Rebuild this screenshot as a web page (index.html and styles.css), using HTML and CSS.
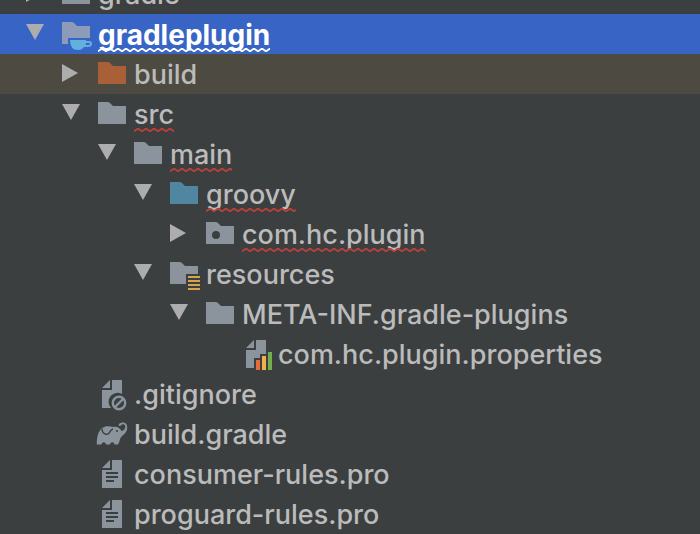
FILE: index.html
```html
<!DOCTYPE html>
<html lang="en">
<head>
<meta charset="utf-8">
<title>Project</title>
<link rel="stylesheet" href="styles.css">
</head>
<body>
<svg class="defs" aria-hidden="true">
  <defs>
    <symbol id="open" viewBox="0 0 36 40"><path d="M0 10H18L9 26Z" fill="#adadad"/></symbol>
    <symbol id="closed" viewBox="0 0 36 40"><path d="M0 10L16 19L0 28Z" fill="#adadad"/></symbol>
    <symbol id="folder" viewBox="0 0 36 40"><path d="M0 8H9.500Q11 8 12 9L15 12H28V30H0Z" fill="currentColor"/></symbol>
    <symbol id="module" viewBox="0 0 36 40">
      <path d="M0 8H9.500Q11 8 12 9L15 12H28V24H6V30H0Z" fill="currentColor"/>
      <path d="M8 26H24V27H27Q30 27 30 29.500Q30 33 26 33H22Q20 36 16 36Q8 36 8 26ZM24 29Q24 30 23.500 31H26Q28 31 28 29.500Q28 29 27 29Z" fill="#62b1dc" fill-rule="evenodd"/>
    </symbol>
    <symbol id="package" viewBox="0 0 36 40"><path d="M0 8H9.500Q11 8 12 9L15 12H28V30H0ZM10 17A4 4 0 1 0 10 25A4 4 0 1 0 10 17Z" fill="currentColor" fill-rule="evenodd"/></symbol>
    <symbol id="resources" viewBox="0 0 36 40">
      <path d="M0 8H9.500Q11 8 12 9L15 12H28V20H16V30H0Z" fill="currentColor"/>
      <path d="M18 22H30V24H18ZM18 26H30V28H18ZM18 30H30V32H18ZM18 34H30V36H18Z" fill="#d5a54b"/>
    </symbol>
    <symbol id="properties" viewBox="0 0 36 40">
      <path d="M4 14L12 6V14ZM14 6H24V20H18V24H12V34H4V16H14Z" fill="currentColor"/>
      <path d="M14 26H18V36H14Z" fill="#e66d3b"/><path d="M20 22H24V36H20Z" fill="#f0b04e"/><path d="M26 18H30V36H26Z" fill="#72ad50"/>
    </symbol>
    <symbol id="ignored" viewBox="0 0 36 40">
      <path d="M4 14L12 6V14ZM14 6H24V20A9 9 0 0 0 13 34H4V16H14Z" fill="currentColor"/>
      <circle cx="21" cy="29" r="6.200" fill="none" stroke="currentColor" stroke-width="2.400"/>
      <path d="M17 33L25 25" stroke="currentColor" stroke-width="2.400"/>
    </symbol>
    <symbol id="gradle" viewBox="0 0 36 40">
      <path d="M-1.200 30.500C-1.200 23 0 18 3.500 14.500C7 11.500 12 12 15 13C19 12 22 14 23.500 17C28 16.500 28.500 10.300 25 10.300C23 10.300 22.800 12.500 21.300 12C19.500 11 21.500 8.500 25 8.500C30 8.500 30 15 28 18C26 21 23 22 22 25C21.500 27 21 29 20 30.500H16.500C16 27.500 12.500 27.500 12 30.500H8C7.500 27.500 4 27.500 3.500 30.500Z" fill="currentColor"/>
      <path d="M4 14.500C4 20 9 22 11.500 18.500C12.500 17 13 15.500 15 15" fill="none" stroke="#3c3f40" stroke-width="1.300"/><circle cx="19" cy="17" r="1" fill="#3c3f40"/>
    </symbol>
    <symbol id="text" viewBox="0 0 36 40"><path d="M4 14L12 6V14ZM14 6H24V34H4V16H14ZM8 18V20H20V18ZM8 22V24H20V22ZM8 26V28H16V26Z" fill="currentColor" fill-rule="evenodd"/></symbol>
    <pattern id="wave" width="8" height="4" patternUnits="userSpaceOnUse"><path d="M-1 4L4 0.500L9 4" fill="none" stroke="#bc4039" stroke-width="1.800"/></pattern>
    <pattern id="wave-selected" width="8" height="4" patternUnits="userSpaceOnUse"><path d="M-1 4L4 0.500L9 4" fill="none" stroke="#fff" stroke-width="1.800"/></pattern>
  </defs>
</svg>
<main class="viewport">
  <ul class="tree">
    <li><div class="row"><button class="twisty" aria-label="Expand gradle"><svg><use href="#closed"/></svg></button><svg class="icon"><use href="#folder"/></svg><span class="label">gradle</span></div></li>
    <li>
      <div class="row selected"><button class="twisty" aria-label="Collapse gradleplugin"><svg><use href="#open"/></svg></button><svg class="icon"><use href="#module"/></svg><span class="label">gradleplugin<svg class="squiggle"><rect width="100%" height="4" fill="url(#wave-selected)"/></svg></span></div>
      <ul>
        <li><div class="row excluded"><button class="twisty" aria-label="Expand build"><svg><use href="#closed"/></svg></button><svg class="icon build"><use href="#folder"/></svg><span class="label">build</span></div></li>
        <li>
          <div class="row"><button class="twisty" aria-label="Collapse src"><svg><use href="#open"/></svg></button><svg class="icon"><use href="#folder"/></svg><span class="label">src<svg class="squiggle"><rect width="100%" height="4" fill="url(#wave)"/></svg></span></div>
          <ul>
            <li>
              <div class="row"><button class="twisty" aria-label="Collapse main"><svg><use href="#open"/></svg></button><svg class="icon"><use href="#folder"/></svg><span class="label">main<svg class="squiggle"><rect width="100%" height="4" fill="url(#wave)"/></svg></span></div>
              <ul>
                <li>
                  <div class="row"><button class="twisty" aria-label="Collapse groovy"><svg><use href="#open"/></svg></button><svg class="icon source"><use href="#folder"/></svg><span class="label">groovy<svg class="squiggle"><rect width="100%" height="4" fill="url(#wave)"/></svg></span></div>
                  <ul>
                    <li><div class="row"><button class="twisty" aria-label="Expand com.hc.plugin"><svg><use href="#closed"/></svg></button><svg class="icon"><use href="#package"/></svg><span class="label">com.hc.plugin<svg class="squiggle"><rect width="100%" height="4" fill="url(#wave)"/></svg></span></div></li>
                  </ul>
                </li>
                <li>
                  <div class="row"><button class="twisty" aria-label="Collapse resources"><svg><use href="#open"/></svg></button><svg class="icon"><use href="#resources"/></svg><span class="label">resources</span></div>
                  <ul>
                    <li>
                      <div class="row"><button class="twisty" aria-label="Collapse META-INF.gradle-plugins"><svg><use href="#open"/></svg></button><svg class="icon"><use href="#folder"/></svg><span class="label">META-INF.gradle-plugins</span></div>
                      <ul>
                        <li><div class="row leaf"><svg class="icon"><use href="#properties"/></svg><span class="label">com.hc.plugin.properties</span></div></li>
                      </ul>
                    </li>
                  </ul>
                </li>
              </ul>
            </li>
          </ul>
        </li>
        <li><div class="row leaf"><svg class="icon"><use href="#ignored"/></svg><span class="label">.gitignore</span></div></li>
        <li><div class="row leaf"><svg class="icon"><use href="#gradle"/></svg><span class="label">build.gradle</span></div></li>
        <li><div class="row leaf"><svg class="icon"><use href="#text"/></svg><span class="label">consumer-rules.pro</span></div></li>
        <li><div class="row leaf"><svg class="icon"><use href="#text"/></svg><span class="label">proguard-rules.pro</span></div></li>
      </ul>
    </li>
  </ul>
</main>
</body>
</html>
```
FILE: styles.css
```css
* { box-sizing: border-box; }
body {
  margin: 0;
  background: #3c3f40;
  color: #bbbbbb;
  font: 500 27px/40px Inter, "Liberation Sans", sans-serif;
}
.defs { position: absolute; width: 0; height: 0; }

/* The tree is scrolled to its end, so the top row may be cut off. */
.viewport {
  display: flex;
  flex-direction: column;
  justify-content: flex-end;
  height: 100vh;
  overflow: hidden;
}
.tree { --indent: 26px; flex: none; }
ul { margin: 0; padding: 0; list-style: none; }
.tree ul { --indent: 62px; }
.tree ul ul { --indent: 98px; }
.tree ul ul ul { --indent: 134px; }
.tree ul ul ul ul { --indent: 170px; }
.tree ul ul ul ul ul { --indent: 206px; }

.row {
  display: flex;
  height: 40px;
  padding-left: var(--indent);
  white-space: nowrap;
}
.row.leaf { padding-left: calc(var(--indent) + 36px); }
.twisty {
  flex: none;
  width: 36px;
  height: 40px;
  padding: 0;
  border: 0;
  background: none;
}
.twisty svg { display: block; width: 36px; height: 40px; }
.icon {
  flex: none;
  width: 36px;
  height: 40px;
  overflow: visible;
  color: #8b949d;
}
symbol { overflow: visible; }
.icon.build { color: #a96036; }
.icon.source { color: #50869f; }
.label { position: relative; padding-top: 1px; }
.squiggle {
  position: absolute;
  left: 0;
  top: 34px;
  width: 100%;
  height: 4px;
}
.selected { background: #3865c5; color: #fff; font-size: 28px; font-weight: 700; }
.selected .icon { color: #8b9bb8; }
.excluded { background: #4d4a41; }
```
